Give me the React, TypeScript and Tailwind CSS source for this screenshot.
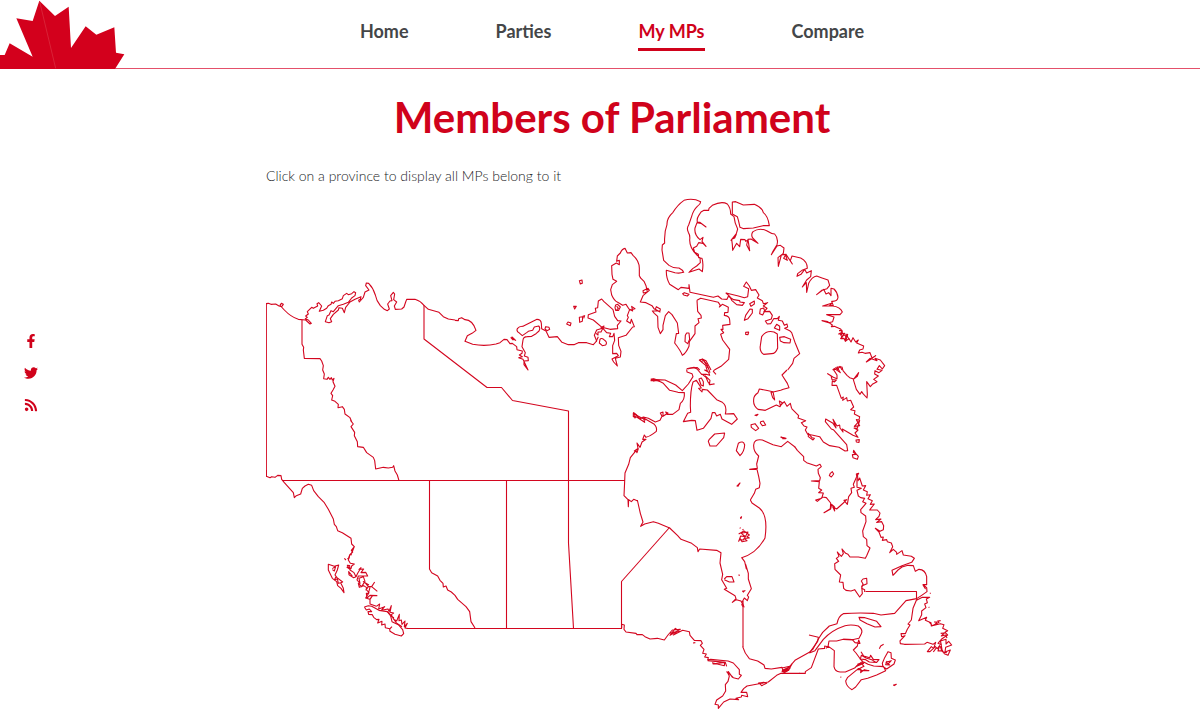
import { FaFacebookF, FaRss, FaTwitter } from "react-icons/fa";

const navItems = [
  { label: "Home", href: "#home", active: false },
  { label: "Parties", href: "#parties", active: false },
  { label: "My MPs", href: "#mps", active: true },
  { label: "Compare", href: "#compare", active: false },
];

const socialLinks = [
  { label: "Facebook", href: "#facebook", Icon: FaFacebookF },
  { label: "Twitter", href: "#twitter", Icon: FaTwitter },
  { label: "RSS feed", href: "#rss", Icon: FaRss },
];

type MapSheet = { name: string; x: number; y: number; paths: string[] };

// Survey lines that run straight between provinces and territories.
const borders = [
  "M282 480.500H625",
  "M429.500 480.500V569",
  "M506.500 480.500V628.500",
  "M424 305V339L487 387.500H501.500L512.500 400.500L568.500 411V543L573.500 628.500",
  "M407 628.500H621.500V581.500L669.500 527.500",
  "M743 601V647",
  "M865.500 591.500H916.500V598",
];

// Coastlines are stored on sheets, each drawn at three units per map unit.
const sheets: MapSheet[] = [
  {
    name: "yukon",
    x: 255,
    y: 270,
    paths: [
      "M34 620V101L40 100L48 103L62 102L72 108L80 110L85 103L79 100L75 106L88 120Q108 141 130 148L152 150L165 162L169 160L160 150L151 146L157 142L152 138L160 132L157 125L170 112L175 115L188 108L186 101L191 98L200 108L193 124L205 121L215 115L220 107L228 103L230 96L235 100L240 94L250 92L262 86L265 77L275 70L280 74L290 71L297 65L302 68L300 77L290 84L280 97L265 103L250 107L235 125L228 122L222 135L217 137L211 155L222 158L230 155L226 146L235 133L250 120L252 113L262 115L268 128L272 112L285 96L300 88L318 80L316 88L311 91L313 96L325 82L330 66L342 60L332 47L334 39L341 40Q355 54 361 75Q364 92 376 107L388 118L397 122L403 117L398 102L405 93L411 92L407 77L415 67L419 72L416 89L425 96L418 108L421 118L440 117L447 111L452 96L455 88L480 88Q495 92 507 106L520 118L552 127L565 140L580 147L600 150",
      "M141 150V223L146 232L145 240L148 265L195 266L200 273L205 287L203 300L208 312L206 326L216 328L220 322L225 328L229 323L232 330L237 325L234 335L240 349L234 360L228 370L233 377L230 390L240 394L250 403L249 413L262 410L268 418L270 432L285 443L290 455L287 452L295 462L288 470L299 487L298 497L307 515L308 530L325 532L335 548L355 562L359 572L362 597L385 592L400 594L413 592L416 587L420 603L427 615L432 632",
    ],
  },
  {
    name: "pacific",
    x: 255,
    y: 470,
    paths: [
      "M34 0V19L45 23L50 20L60 22L68 16L78 17L80 28L88 38L115 68L118 83L124 77L137 72L142 55L150 48L160 43L170 46L176 62L190 80L208 98L220 118L235 147L238 163L244 170L248 182L262 188L288 205L290 222L298 230L289 241L293 246L284 255L282 264L277 266M298 230L288 255L294 236",
      "M268 265L273 270M284 255L280 270L286 280L298 282L290 288L288 296L280 292L277 286L284 287L285 300L297 308L303 320L296 323L282 314L281 305L292 318M275 291L284 297",
      "M303 320L308 310L318 293L312 298L326 297L318 308L332 307L338 318L310 318L306 330L315 340L312 325L325 320L330 334L320 350L310 340L313 352L326 347L335 353L333 360L340 350L332 340L325 335L342 345M340 350L350 350L359 336M350 350L367 364M345 352L340 370L334 370L336 384L345 376L367 377M335 360L342 368L332 384L344 388L352 378L345 388L345 402L364 409",
      "M220 283L238 289L251 285L247 300L240 315L246 323L263 336L257 338L265 355L267 368L258 355L248 347L245 335L232 325L220 300ZM232 296L242 289L238 303L232 299M243 320L238 330L247 326L250 340L258 338",
      "M328 411L340 407L350 409L372 421L397 425L407 438L411 455L430 464L443 479L446 491L439 498L420 493L405 484L404 477L411 470M328 411L334 420L343 417L350 425L339 425L341 433L352 434L356 442L365 449L372 448L368 459L381 454L380 465L390 462L391 473L404 476",
      "M364 409L374 402L371 417L389 410L379 421L399 417L402 424L409 407L405 427L416 429L409 434L416 448L425 453L433 433L432 452L439 450L441 463L450 453L448 470L457 460L450 474L457 475M397 425L411 439L424 459L441 470M407 438L417 443",
      "M523 296L530 308L548 318L555 331L564 340L565 351L573 348L578 360L589 366L600 376L608 388L633 410L644 425L648 455L660 474",
    ],
  },
  {
    name: "arctic-coast",
    x: 440,
    y: 240,
    paths: [
      "M45 241L55 242L56 236L65 233L75 239Q98 240 108 271L96 280L82 287L75 304L98 313Q135 320 168 312L180 308L192 298L201 299L210 311L217 310L230 320L231 329L247 333L246 340L238 345L247 350L236 353L249 358L264 390L252 374L252 363L265 362L264 352L253 348L256 338L246 320L249 300Q250 290 262 290L275 289L288 281L297 273Q302 264 296 258L283 261L278 271L265 274L260 278L247 287L239 280Q228 275 232 266Q238 258 249 259L291 238Q303 238 304 250L305 266L318 273L327 292L352 290L366 307L385 314L402 314L415 308L440 308L460 314L470 303L463 286L470 270L492 263L510 268L533 266L532 256L543 243L533 242L524 229L519 209L492 185L485 177L475 183L473 203L466 205L468 216L445 224L444 234L460 240L486 262L500 278L512 280L508 290L518 290L522 280L524 301L518 317L518 341L530 340L535 347L516 357L521 366L532 378L526 355L541 351L543 334L536 316L535 293L558 286L578 261L583 260L574 238L571 250L560 243L565 232L562 227L568 211L585 206L575 199L578 213L567 207L558 193L548 196L533 187Q523 183 515 165L512 149L517 134L530 124L519 118L516 103L515 77L529 69L538 74L538 61L530 64L532 48L541 39Q546 26 555 25L562 39L573 38L579 46Q598 62 598 85V107L602 114",
      "M317 260L327 262L329 268L321 272L315 267ZM480 298Q484 292 494 301Q503 307 497 315L487 317L478 309ZM212 292L219 300L216 291L227 301L219 297M527 195L533 193L541 201L536 211L527 211L525 202ZM530 198L535 205L530 209M418 122L426 120L427 130L421 132ZM401 199L409 199L404 207ZM384 246L393 249L391 257L380 252ZM418 232L428 230L427 244L419 247ZM428 229L434 227L431 235M482 263L492 258L483 276L474 276L474 285L468 280M475 290L468 305",
      "M632 418L641 416L650 419L641 423L635 418M648 421L660 424M580 517L590 525L585 534L581 521L605 534L618 540",
    ],
  },
  {
    name: "high-arctic",
    x: 640,
    y: 190,
    paths: [
      "M132 31Q158 23 182 35Q182 42 172 49Q160 60 155 79L146 105Q139 115 145 127Q151 136 149 150Q149 180 180 203L181 218L170 228L158 236L147 247L177 237L187 245Q191 220 186 205L176 203L175 193L164 187L160 174L170 169L176 158L189 160L198 169L186 154L189 142L180 149Q162 134 165 114L171 98L183 100L198 111L180 97L172 96Q170 86 176 77L183 66L192 61L206 61L207 55L217 46Q245 32 262 42Q272 54 272 72L282 80Q284 100 293 117L289 131L273 151L289 133L284 144L275 148L277 164L278 181L290 160L299 170L302 148L315 149L317 154L323 151L320 165L329 182L324 148L333 147L354 160L338 144Q332 134 339 125Q358 112 380 122Q394 131 404 132Q416 145 411 164L399 184L394 194L411 168L421 166L432 174L430 190L414 203L415 229L424 195L436 193L442 211L431 205L438 193L457 222L451 212L456 198L482 204Q502 214 502 235L486 241L473 251L471 259L483 253L494 238L500 249L514 242L512 260L500 270L487 291L499 278L500 307L506 280Q516 260 530 258L544 263L564 270L569 286L561 296L545 301L530 314L551 298L558 312L566 308L573 317L573 295L582 297Q592 306 594 322Q593 335 575 334L580 347L569 346L577 339L548 348L578 348Q600 350 607 366L600 374L560 374L582 381L578 395L566 398L546 392L563 395L577 405L574 410L583 409L602 417L607 427L596 432L614 430L602 446L612 445L616 454L618 432L628 449",
      "M132 31Q112 45 99 67Q80 84 81 104Q72 127 74 159L67 165L66 180L71 211L87 226Q100 235 117 234Q129 240 131 247Q118 251 105 248L79 241Q78 264 89 283L115 299L123 292L147 295L147 284L150 307L185 314L220 322L234 318L245 327L261 328L265 319L281 329L299 332L300 336L313 338L307 346L290 344L275 331L269 319L258 309L295 318L313 323L323 320L326 296L311 289L319 276L328 288L334 301L347 299L357 315L352 324L367 332L370 341L383 338L370 348L381 355L372 365L389 364L397 376L394 387L376 393L382 402L392 401L401 386L412 386L418 379L415 391L427 393L433 406L441 402L443 411L434 415L449 422L455 428L466 460L479 491L462 505L458 520L443 540",
      "M171 331L182 325L235 337L241 346L238 351L247 343L258 348L265 352L264 367L254 368L253 376Q269 378 269 390L270 403L248 406L249 418L243 418L251 428L242 433L248 450L269 478L266 508L243 529L223 540M171 331L173 364L183 376L184 384L174 386L177 398L165 408L165 431L148 455L147 469Q138 490 127 496Q122 482 104 459L109 431L116 430L112 399L96 374L86 365L76 377L69 406L69 419L61 431L54 412L53 379L43 370L37 363L60 363L61 357L49 350L46 358L60 366L42 356L36 347L18 338L1 336L9 317L28 301L24 295L9 302L10 309L22 306L18 287L12 274L0 262",
      "M277 36L287 35L310 45L343 43Q360 50 367 60L370 68Q384 78 388 107L369 107L340 114L311 116L300 112Q296 92 292 80L277 72ZM128 311L133 308L147 313L142 318L131 315ZM317 376L330 357L337 358L337 369L324 386L313 391ZM329 341L343 333L343 342L333 349ZM361 357L371 354L374 363L368 375L359 371ZM410 403L419 409V421L403 414ZM419 442L433 440L452 448L450 459L432 458L421 453ZM365 440Q378 420 402 426L412 432L413 474Q407 491 395 491L371 493Q358 484 361 467ZM317 427L326 426L324 434L317 433ZM140 429L147 429L149 448L143 461L135 455L136 436Z",
      "M179 511L187 507L198 512L208 530L213 540M183 515L191 511L204 534M140 536L150 534L172 533L179 540M578 540L588 533L592 539L600 529L606 540",
    ],
  },
  {
    name: "hudson-bay",
    x: 620,
    y: 340,
    paths: [
      "M283 90L280 94L288 103M203 87L222 82L231 87L245 103L258 103L269 106L266 97L254 90L262 93L257 76L238 60L248 58L261 73L270 98M200 88L201 96L216 101L219 110L205 132L187 152L167 135L135 120L95 118L93 122L115 122L130 130L149 151L174 157L193 158Q195 180 181 190L177 209L158 223L141 223L137 216L144 219L129 229L129 216L121 219L126 229L120 241L106 246L85 235L70 231L60 236L51 227L40 219L40 230L51 232L74 247L71 234L103 253Q112 262 109 274L100 281Q88 290 78 292L73 285L68 298L78 298L66 306L60 322L51 309L54 325L43 333L55 326L51 338L48 332L31 353L26 373L15 399L14 424L12 467L24 479L25 500L26 479L34 485L41 478L53 483",
      "M248 104L258 112L264 126L270 134L283 132L268 134L270 121L255 107M237 117L244 114L250 125L250 138L243 135ZM219 126Q211 150 211 198L212 217L203 220L190 245L215 241L226 242L231 271L250 265L273 235L277 218L285 218L290 228L301 223L306 237L335 253L352 237L341 221L316 222Q322 198 307 187L290 179L262 150L247 148L246 156L236 145L244 144L235 130L229 121ZM268 298L284 282L314 279L311 293L289 318L270 318L265 304ZM355 310Q370 300 374 315Q373 335 360 347L349 332ZM393 254L405 251L416 265L407 272L394 262ZM422 245L430 243L437 255L427 257L421 249ZM405 226L414 223L410 227ZM350 439L360 429L353 440M482 291L497 296L487 296M362 537L365 529",
      "M501 90L486 105L502 130L507 143L490 148L482 151L463 155L453 157L458 173L464 180L459 155L438 151L418 147L414 158Q400 167 401 180Q399 197 414 208L436 211L458 200L469 195L480 200L487 188L478 183L481 197L493 185L501 199L511 190L515 206",
      "M525 321L503 304L484 320L459 314L427 300Q402 296 401 315Q400 335 416 348L410 372L412 385L389 388L411 388L416 409L420 430L418 443L407 448L403 460L391 480",
    ],
  },
  {
    name: "baffin-south",
    x: 740,
    y: 330,
    paths: [
      "M297 2L306 1L305 13L300 10L306 22L311 14L319 20L323 13L317 33L327 26L333 36L339 23L347 36L355 30L350 39L371 48L369 57L359 60L355 69L366 67L375 70L390 68L396 84L407 77L395 86L379 96L390 85L411 92L405 85L421 90L434 107L427 117L418 107L411 118L426 121L417 128L405 122L404 132L415 138L401 148L411 155L397 163L391 170L380 155L382 193L381 204L369 191L365 185L360 193L349 178L340 149L356 128L352 139L341 147L329 143L321 136L309 122L306 111L291 111L301 128L287 118L280 118L291 135L291 146L280 142L263 131L273 137L276 149L289 150L283 156L277 153L276 166L290 166L304 205L310 201L308 211L320 203L322 213L332 211L337 222L341 231L332 239L345 242L343 252L359 260L357 270L349 269L359 287L343 289L359 272L352 295L342 294L354 300L345 309L354 322L339 316L307 297L309 306L300 294L299 285L291 288L279 268L284 282L288 294L279 280L257 267L256 275L274 297L280 299L320 344L323 362L315 363L297 352L269 347L250 336L239 320L219 316L203 313L196 300L201 291L192 288L184 278L197 272L174 264L176 257L155 236",
      "M205 310L216 323L223 325L219 330L205 320ZM348 330L358 329L357 337L349 336ZM341 361L347 370L355 379L352 388L339 383L337 374L348 373L340 367ZM271 430L277 425L281 432L274 441L268 437ZM122 321L138 325L125 323",
      "M164 350L172 361L181 370L191 380L191 391L200 398L229 408L240 403L244 410L234 418L235 430L241 443L239 452L214 453L238 455L236 475L245 480L236 488L250 489L245 505L227 510L232 514L248 501L259 503L272 519L271 536L252 548L272 537L275 523L283 530L284 543L278 530L290 537L310 519L320 509L312 511L322 523L326 500L335 488L333 475L343 472L340 463L350 440L356 430L349 432L351 442",
    ],
  },
  {
    name: "ontario",
    x: 610,
    y: 500,
    paths: [
      "M82 0L91 40L99 66L92 79L104 72L130 65L145 70L179 84L203 107L213 118L245 130L262 143L264 155L269 147L320 151L333 158L330 189L338 223L335 239L350 265L343 268L375 287L378 296L367 307L379 299L393 303L402 321L396 307L403 294L412 302L416 291L412 286L424 266L415 237L415 220L407 193L409 207L404 185L395 173Q440 160 465 114Q475 45 448 24L426 9L421 0",
      "M343 237L350 230L366 230L372 246L358 246L343 239M386 102L402 93L418 105L411 110L418 114L402 115L411 122L396 125L390 115L386 124L392 108L406 110L394 100L414 96L400 120L387 119M391 55L394 50M389 85L392 83M398 87L400 91M385 225L390 226M396 274L405 272L399 277M395 312L398 320",
      "M35 385V373L43 375L42 388L48 396L78 400L81 404L97 404L105 410L120 417L142 415L163 420L174 405L187 390L211 388L180 406L196 385L207 393L182 399L201 398L190 405L218 391L238 395L240 406L253 421L273 422L277 430L271 436L282 448L278 460L289 462L284 471L295 473L293 480L302 478L354 483L370 489L388 509L388 523L394 526L385 537L370 533L352 515M306 488L343 497L344 487L308 492M293 482L346 487L350 499M352 517L358 528L354 544L346 554L347 573L338 588L320 600L315 613L325 615V625L341 606L360 597L386 599L378 595L394 591L395 586L413 590L410 577L393 577L401 566L411 558L455 550L475 546L500 526L513 520H570M349 515L360 523L355 515L368 533M444 550L461 547L470 550L455 557L446 548M249 429L256 428",
      "M398 440Q404 461 418 476L443 483L462 495L465 505L484 507L516 502L520 516L536 511L546 491M516 504L539 499L525 513L541 505",
    ],
  },
  {
    name: "atlantic",
    x: 770,
    y: 470,
    paths: [
      "M262 10L264 32L269 24L277 48L287 47L280 60L292 65L290 76L301 74L294 86L307 92L301 103L313 102L302 116L299 120L322 120L330 129L327 139L317 149L333 147L320 157L335 155L341 167L340 179L330 184L316 175L327 186L333 202L340 201L337 211L350 209L352 215L364 219L368 230L359 248L370 238L380 247L380 253L396 242L400 255L424 259L433 265L425 277L396 287L366 301L369 316L384 300L396 291L414 286L430 287L436 304L447 298Q466 299 470 320V344L459 344L470 353L471 365L455 376L440 386L408 392L374 430L333 435L310 430Q260 428 220 431Q205 438 201 461L178 468L158 487L147 504L129 537L118 547L75 571L55 594L37 601L60 590L36 605L55 601L38 611",
      "M261 25V52L274 55L261 61L265 78L272 83L284 85L278 95L288 100L283 106L272 119L273 128L287 138L288 155L278 183L280 200L290 208L291 227L300 234L290 257L286 265L265 261L240 261L234 253L227 250L216 237L220 251L214 259L202 246L207 259L199 265L206 274L194 281L195 298L212 315L208 336L219 337L221 355L228 361L243 363L254 359L269 381L277 371L275 348L291 341L290 325L279 327L274 333L279 342L275 355L284 359V366",
      "M117 495L145 502L143 514L118 549M118 549L135 542L160 508Q185 480 225 467Q245 463 265 468Q280 480 274 491L267 505L247 509L220 508L200 513L177 513L174 530L164 528L164 535L145 537L133 569L124 593L106 605V610H88",
      "M168 535L175 529L193 542L192 590Q195 605 210 606L226 606L254 594L265 583L278 574L271 567L258 549L250 540L262 528L266 510L270 520L255 518L247 509L220 508M267 442L285 443L320 454L333 470L315 471L291 461L270 450ZM328 536L332 528L341 523",
      "M262 583L274 580L282 589L261 599L273 598L272 608L283 599L297 602L275 602L265 596L233 622L227 633Q229 650 246 659L257 651L274 629L293 625L320 615L347 602L341 590L330 589L311 588L294 583L281 576L260 589L282 580M273 545L281 558L299 563L302 556L310 568L327 569L320 577L298 576L287 569L271 567L274 556L288 564L305 569L317 577M337 580L344 563L354 545L363 548L364 565L376 570L372 582L350 597L339 590ZM351 573L347 584L359 585L348 577L364 572L354 582M211 621L214 622M369 646L379 643L372 647",
      "M441 386L429 415L424 450L414 462L420 465L412 478L406 491L393 491L395 500L405 497L390 513L391 521L403 523L464 522L471 517L489 523L497 517L491 535L484 530L472 545L480 545L496 530L502 536L509 527L504 543L515 542L511 530L523 551L534 556L541 540L525 546L527 532L545 525L536 514L528 522V508L511 513L514 524L504 520L516 506L533 495L525 487L533 482L518 475L522 464L511 461L484 468L483 458L466 451L470 442L446 452L455 434L455 423L468 413L464 402L472 398L469 387L479 382L457 382L441 390M492 456L500 456L496 463L507 457L503 453L512 452M476 411L478 413M481 368V371M459 345L466 356L463 345M477 456L487 467L501 460M512 490L523 489L514 498L527 495L531 504M500 532L490 546M512 515L517 545L531 548",
    ],
  },
];

function MapleLeaf() {
  return (
    <svg viewBox="0 0 375 207" className="block h-[69px] w-[125px]" role="img" aria-label="Maple leaf">
      <path
        d="M0 165H14L29 130L98 170L49 55L98 63L118 2L165 48L206 20L213 144L257 79L289 104L343 82L348 158L373 163L345 207H0Z"
        fill="#d3001c"
      />
      <path d="M119 5L167 205" fill="none" stroke="#dc3346" strokeWidth="2" />
    </svg>
  );
}

function CanadaMap() {
  return (
    <svg viewBox="266 190 692 526" className="block w-full" role="img" aria-label="Map of Canadian provinces">
      <g fill="none" stroke="#d3061f" strokeWidth="1.1" strokeLinejoin="round">
        {borders.map((d) => (
          <path key={d} d={d} />
        ))}
        {sheets.map((sheet) => (
          <g key={sheet.name} transform={`translate(${sheet.x} ${sheet.y}) scale(0.33333)`} strokeWidth="3.3">
            {sheet.paths.map((d) => (
              <path key={d} d={d} />
            ))}
          </g>
        ))}
      </g>
    </svg>
  );
}

export default function App() {
  return (
    <div className="min-h-screen bg-white font-['Lato',sans-serif] text-[#444648]">
      <header className="flex border-b border-[#e4506a]">
        <a href="#home" className="-mb-px shrink-0">
          <MapleLeaf />
        </a>
        <nav className="flex flex-1 items-start justify-center gap-[87px] pt-[19px] pr-[101px]">
          {navItems.map((item) => (
            <a
              key={item.label}
              href={item.href}
              aria-current={item.active ? "page" : undefined}
              className={
                item.active
                  ? "border-b-3 border-[#d0021b] pb-[5px] text-lg leading-6 font-bold text-[#d0021b]"
                  : "pb-[5px] text-lg leading-6 font-bold"
              }
            >
              {item.label}
            </a>
          ))}
        </nav>
      </header>

      <div className="flex">
        <aside className="w-15 shrink-0 pt-[265px] pl-6">
          <ul className="flex flex-col gap-[18px]">
            {socialLinks.map(({ label, href, Icon }) => (
              <li key={label}>
                <a href={href} aria-label={label} className="block text-[#d0021b]">
                  <Icon className="h-3.5 w-auto" />
                </a>
              </li>
            ))}
          </ul>
        </aside>

        <main className="min-w-0 flex-1 pr-9">
          <div className="mx-auto max-w-[692px]">
            <h1 className="pt-[23px] text-center text-[42px] leading-[50px] font-bold text-[#d0021b]">
              Members of Parliament
            </h1>
            <p className="pt-6 pb-1 text-sm leading-5 font-light text-[#222426]">
              Click on a province to display all MPs belong to it
            </p>
            <CanadaMap />
          </div>
        </main>
      </div>
    </div>
  );
}
